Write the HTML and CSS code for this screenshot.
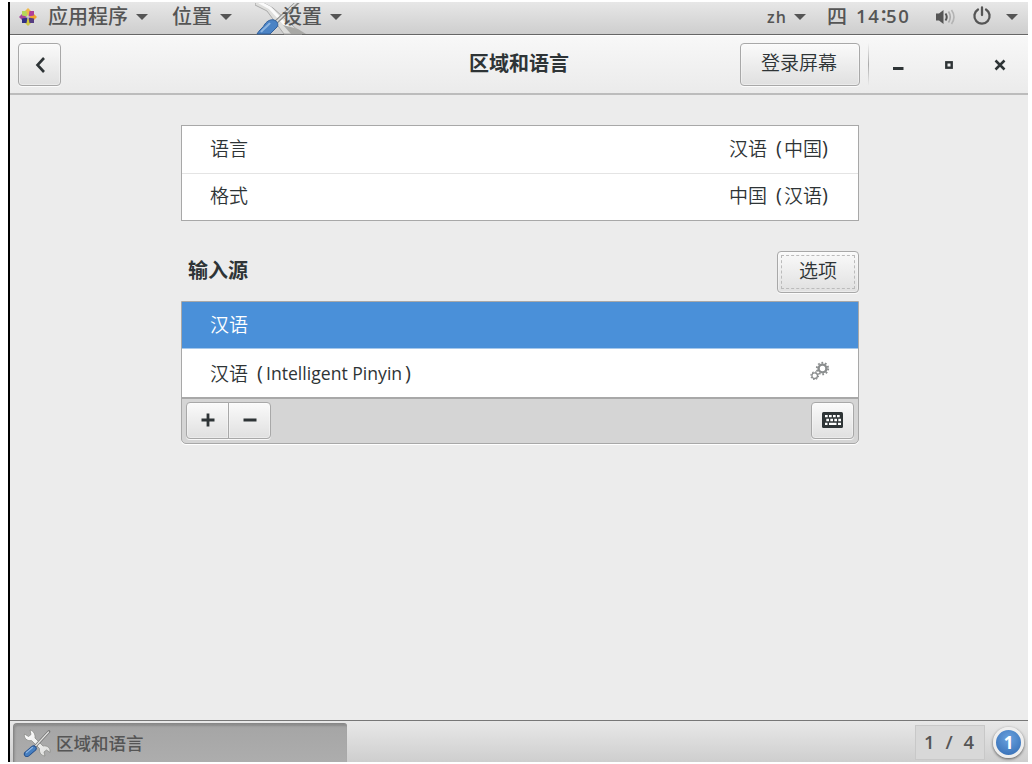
FILE: index.html
```
<!DOCTYPE html>
<html lang="zh-CN">
<head>
<meta charset="utf-8">
<title>区域和语言</title>
<link rel="stylesheet" href="styles.css">
</head>
<body>
<svg width="0" height="0" class="defs">
  <defs>
    <linearGradient id="steel" x1="0" y1="0" x2="1" y2="1"><stop offset="0" stop-color="#ffffff"/><stop offset="1" stop-color="#dcdcda"/></linearGradient>
    <symbol id="tools" viewBox="0 0 28 28">
      <path d="M7 1 8 5.500 5.500 7.500 1.500 5C.6 9 4 12.500 8.500 11.500L16.500 19.500C16 23.500 18 26.500 22 27L21 23 23.500 21 27 23.500C28 19.500 24.500 16 20 17L12 9C12.500 5 10.500 2 7 1Z" fill="url(#steel)" stroke="#8b8d89" stroke-width=".8"/>
      <path d="M26 2.500 12.500 17" stroke="#777" stroke-width="2.800" stroke-linecap="round"/>
      <path d="M25.500 3 12.500 17" stroke="#e4e4e2" stroke-width="1.200" stroke-linecap="round"/>
      <path d="M10.500 19.500 4 25" stroke="#204a87" stroke-width="6.200" stroke-linecap="round"/>
      <path d="M10.500 19.500 4 25" stroke="#477fc0" stroke-width="4.400" stroke-linecap="round"/>
      <path d="M9.500 18.500 3.500 23.500" stroke="#8db5e2" stroke-width="1.200" stroke-linecap="round"/>
    </symbol>
  </defs>
</svg>
<div class="desktop">
  <nav class="topbar">
    <svg class="logo" width="18" height="18" viewBox="0 0 18 18">
      <path d="M9 0 12 3 9 8 6 3Z" fill="#efb94a"/><path d="M18 9 15 12 10 9 15 6Z" fill="#f1a52c"/>
      <path d="M9 18 6 15 9 10 12 15Z" fill="#d0c843"/><path d="M0 9 3 6 8 9 3 12Z" fill="#a6469a"/>
      <path d="M3 3H7.500L8.500 8.500 3 7.500Z" fill="#b4d85a"/><path d="M10.500 3H15V7.500L9.500 8.500Z" fill="#b0409a"/>
      <path d="M3 10.500 8.500 9.500 7.500 15H3Z" fill="#302f85"/><path d="M9.500 9.500 15 10.500V15H10.500Z" fill="#553d80"/>
    </svg>
    <span class="menu apps">应用程序</span><i class="caret"></i>
    <span class="menu places">位置</span><i class="caret"></i>
    <div class="settings">
      <svg class="settings-icon" width="54" height="32" viewBox="0 0 54 32">
        <path d="M1-4 18 5 47 31H29L12 8 0 2Z" fill="#dededc" stroke="#aaa"/>
        <path d="M4-1 15 5 36 28" fill="none" stroke="#fafafa" stroke-width="3"/>
        <path d="M28 22 43 26 51 31H36Z" fill="#a8a8a5"/>
        <path d="M45-3 20 20" stroke="#8c8c8a" stroke-width="4"/><path d="M44-3 20 20" stroke="#e0e0de" stroke-width="1.700"/>
        <path d="M19 17C22 18 24 21 22 24L15 31H2C4 27 8 25 10 21 12 18 16 16 19 17Z" fill="#4b83c5" stroke="#315f9a"/>
        <path d="M6 29C9 25 13 23 15 20" fill="none" stroke="#8eb6e2" stroke-width="2"/>
      </svg>
      <span class="menu">设置</span>
    </div><i class="caret"></i>
    <div class="status">
      <span class="ime">zh</span><i class="caret"></i>
      <span class="clock"><b class="day">四</b><b class="digits">14</b><b class="colon">:</b><b class="digits">50</b></span>
      <svg class="volume" width="20" height="16" viewBox="0 0 20 16" fill="none">
        <path d="M0 4.500H3L7.500 1V15L3 11.500H0Z" fill="#555"/><path d="M9.500 4.500Q12 8 9.500 11.500" stroke="#555" stroke-width="2"/>
        <path d="M12.500 2.500Q16 8 12.500 13.500" stroke="#aaa" stroke-width="1.600"/><path d="M15.500 1Q20.500 8 15.500 15" stroke="#b4b4b4" stroke-width="1.600"/>
      </svg>
      <svg class="power" width="20" height="20" viewBox="0 0 20 20" fill="none" stroke="#555" stroke-width="2.300" stroke-linecap="round">
        <path d="M6 3.500A7.600 7.600 0 1 0 14 3.500M10 1.500V9"/>
      </svg><i class="caret"></i>
    </div>
  </nav>

  <header class="header">
    <button class="btn back"><svg width="11" height="16" viewBox="0 0 11 16" fill="none" stroke="#2e3436" stroke-width="2.600"><path d="M9 1 2.500 8 9 15"/></svg></button>
    <h1 class="title">区域和语言</h1>
    <button class="btn login">登录屏幕</button>
    <i class="divider"></i>
    <svg class="winctl" width="118" height="14" viewBox="0 0 118 14" fill="none" stroke="#2e3436">
      <path d="M0 10.500H10.500" stroke-width="3"/><rect x="53.300" y="4.300" width="5.400" height="5.400" stroke-width="2.400"/><path d="M102.500 2.500 111.500 11.500M111.500 2.500 102.500 11.500" stroke-width="2.500"/>
    </svg>
  </header>

  <main class="panel">
    <section class="list">
      <div class="row"><span>语言</span><span class="value">汉语<b class="par open">(</b>中国<b class="par">)</b></span></div>
      <div class="row"><span>格式</span><span class="value">中国<b class="par open">(</b>汉语<b class="par">)</b></span></div>
    </section>
    <div class="section-head"><h2 class="section-title">输入源</h2><button class="btn options"><span class="focus">选项</span></button></div>
    <section class="sources">
      <div class="source selected">汉语</div>
      <div class="source"><span>汉语<b class="par open">(</b><span class="latin">Intelligent Pinyin</span><b class="par">)</b></span>
        <svg class="gears" width="20" height="20" viewBox="0 0 20 20" fill="none" stroke="#8b8e8f">
          <circle cx="12.500" cy="7.500" r="3.900" stroke-width="2.400"/><circle cx="12.500" cy="7.500" r="5.700" stroke-width="1.900" stroke-dasharray="1.790 1.790"/>
          <circle cx="4.700" cy="14.700" r="2.800" stroke-width="1.300"/><circle cx="4.700" cy="14.700" r="3.800" stroke-width="1.200" stroke-dasharray="1.490 1.490"/>
        </svg>
      </div>
      <div class="toolbar">
        <div class="pair">
          <button class="btn"><svg width="14" height="14" viewBox="0 0 14 14" stroke="#2e3436" stroke-width="2.800"><path d="M.5 7H13.500M7 .5V13.500"/></svg></button>
          <button class="btn"><svg width="14" height="14" viewBox="0 0 14 14" stroke="#2e3436" stroke-width="2.800"><path d="M.5 7H13.500"/></svg></button>
        </div>
        <button class="btn keyboard"><svg width="21" height="16" viewBox="0 0 21 16"><rect width="21" height="16" rx="1.500" fill="#2e3436"/><g stroke="#fff" stroke-width="2.300" fill="none"><path d="M3 4.200H18" stroke-dasharray="2.700 1.300"/><path d="M4.300 8H19" stroke-dasharray="2.700 1.300"/><path d="M3 11.800H5.500M7 11.800H14.500M16 11.800H19"/></g></svg></button>
      </div>
    </section>
  </main>

  <footer class="taskbar">
    <div class="task"><svg class="task-icon" width="28" height="28"><use href="#tools"/></svg><span>区域和语言</span></div>
    <div class="pager">1 / 4</div>
    <div class="badge">1</div>
  </footer>
</div>
</body>
</html>
```
FILE: styles.css
```
* { box-sizing: border-box; }
body {
  margin: 0;
  padding: 2px 4px 2px 8px;
  background: #fff;
  color: #2e3436;
  font: 350 19px/24px "Noto Sans CJK SC", sans-serif;
}
.defs { position: absolute; }
svg { display: block; flex: none; }
.desktop {
  display: flex;
  flex-direction: column;
  height: 760px;
  border-left: 2px solid #000;
  background: #ececec;
  overflow: hidden;
}
.topbar {
  display: flex;
  align-items: center;
  height: 33px;
  padding: 0 10px 5px 9px;
  border-bottom: 1px solid #666;
  background: linear-gradient(#e7e7e7, #cecece);
  color: #555;
  font-size: 20px;
  font-weight: 500;
}
.logo { margin-top: 2px; }
.menu { width: 40px; white-space: nowrap; }
.apps { width: 80px; margin-left: 11px; }
.places { margin-left: 24px; }
.caret {
  flex: none;
  margin: 2px 0 0 8px;
  border: 6px solid transparent;
  border-top: 6px solid #555;
  border-bottom: 0;
}
.settings { position: relative; width: 40px; margin-left: 50px; }
.settings-icon { position: absolute; left: -27px; top: -1px; }
.settings .menu { position: relative; }
.status { display: flex; align-items: center; margin-left: auto; }
.ime { width: 19px; margin-top: 3px; font: 600 16px/24px "Open Sans", sans-serif; letter-spacing: 1px; }
.clock { display: flex; margin-left: 21px; }
.clock b { font-weight: 500; }
.day { width: 20px; margin-right: 9px; }
.clock .digits { width: 25px; font: 600 18.5px/23px "Open Sans", sans-serif; letter-spacing: 1.7px; }
.clock .colon { width: 5px; font: 700 19px/21px "Open Sans", sans-serif; }
.volume { margin: 2px 0 0 25px; }
.power { margin-left: 16px; }
.power + .caret { margin-left: 14px; }
.header {
  display: flex;
  align-items: flex-start;
  height: 60px;
  padding: 8px 17px 0 8px;
  border-bottom: 2px solid #bcbcbc;
  background: linear-gradient(#f8f8f8, #ebebeb);
  box-shadow: inset 0 1px #fff;
}
.header > * { flex: none; }
.btn {
  display: flex;
  align-items: center;
  justify-content: center;
  padding: 0;
  border: 1px solid #a8a8a8;
  border-radius: 4px;
  background: linear-gradient(#fafafa, #e0e0e0);
  box-shadow: 0 1px rgba(255, 255, 255, .8), inset 0 0 0 1px rgba(255, 255, 255, .35);
  color: #2e3436;
  font: inherit;
}
.back { width: 43px; height: 43px; padding-left: 2px; }
.title {
  margin: 8px 0 0 408px;
  width: 100px;
  font-size: 20px;
  line-height: 24px;
  font-weight: 700;
  white-space: nowrap;
}
.login { width: 120px; height: 43px; margin-left: 171px; padding: 0 2px 5px 0; }
.divider { width: 1px; height: 43px; margin-left: 8px; background: linear-gradient(transparent, #aaa, transparent); }
.winctl { margin: 15px 0 0 24px; }
.panel { flex: 1; width: 678px; margin-left: 171px; padding-top: 30px; }
.list { border: 1px solid #a8a8a8; background: #fff; height: 96px; }
.row { display: flex; justify-content: space-between; height: 47px; padding: 10px 28px 0; }
.row + .row { padding-top: 9px; border-top: 1px solid #e4e4e4; }
.value, .source > span { display: flex; white-space: nowrap; }
.par { width: 8px; font: 20px/24px "Open Sans", sans-serif; }
.open { margin-left: 9px; }
.section-head { display: flex; justify-content: space-between; height: 42px; margin-top: 30px; padding-left: 7px; }
.section-title { margin: 7px 0 0; font-size: 20px; line-height: 24px; font-weight: 700; }
.options { width: 82px; height: 42px; padding: 3px; }
.focus { width: 100%; height: 100%; padding-top: 2px; border: 1px dashed #bbb; }
.sources { height: 143px; margin-top: 8px; border: 1px solid #a8a8a8; border-radius: 0 0 5px 5px; background: #d5d5d5; overflow: hidden; box-shadow: 0 1px #fff; }
.source { display: flex; justify-content: space-between; height: 48px; padding: 12px 28px 0; background: #fff; }
.selected { height: 47px; padding-top: 10px; background: #4a90d9; color: #fff; border-bottom: 1px solid #a5c8ec; }
.latin { font: 17.6px/24px "Open Sans", sans-serif; width: 140px; padding-left: 1px; }
.toolbar { display: flex; justify-content: space-between; height: 46px; padding: 3px 4px 0; border-top: 2px solid #a8a8a8; }
.pair { display: flex; }
.pair .btn { width: 43px; height: 37px; padding-bottom: 2px; border-radius: 4px 0 0 4px; }
.pair .btn + .btn { margin-left: -1px; border-radius: 0 4px 4px 0; }
.keyboard { width: 43px; height: 37px; padding-bottom: 2px; }
.taskbar { display: flex; height: 42px; border-top: 1px solid #777; background: linear-gradient(#e8e8e8, #cecece); color: #555; }
.task {
  display: flex;
  width: 334px;
  margin: 2px 0 0 3px;
  padding: 5px 0 0 9px;
  border: 1px solid #888;
  border-width: 1px 0 0 1px;
  border-radius: 4px 3px 0 0;
  background: linear-gradient(#a5a5a5, #adadad);
  box-shadow: inset 1px 2px 2px rgba(0, 0, 0, .15);
  font-size: 17.5px;
  font-weight: 500;
  line-height: 27px;
}
.task span { margin-left: 5px; }
.pager {
  width: 70px;
  height: 35px;
  margin: 4px 0 0 568px;
  padding-left: 8px;
  border: 1px solid #c8c8c8;
  background: #d8d8d8;
  font: 600 18.5px/31px "Open Sans", sans-serif;
  letter-spacing: 1.5px;
  word-spacing: 3px;
  white-space: nowrap;
}
.badge {
  width: 31px;
  height: 31px;
  margin: 6px 0 0 8px;
  border: 3px solid #eee;
  border-radius: 50%;
  background: radial-gradient(circle at 50% 35%, #6aa2df, #2f68b1);
  box-shadow: 0 1px 3px rgba(0, 0, 0, .6);
  color: #fff;
  font: 700 17px/25px "Open Sans", sans-serif;
  text-align: center;
}
```
